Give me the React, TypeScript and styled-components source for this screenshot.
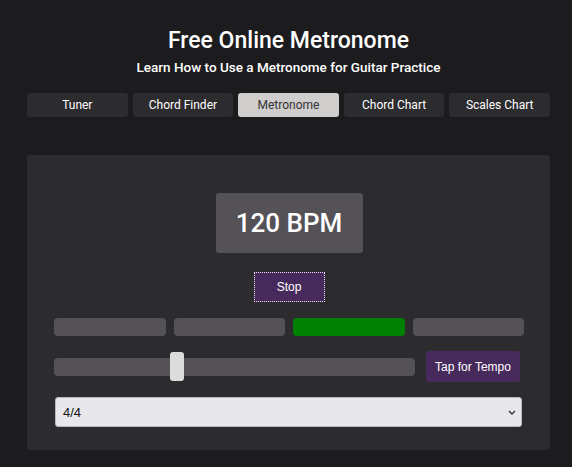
import React, { useState } from "react";
import styled, { createGlobalStyle } from "styled-components";

const Global = createGlobalStyle`
  html, body { margin: 0; padding: 0; background: #1c1b1e; }
  body { font-family: Roboto, "Liberation Sans", Arial, sans-serif; color: #fff; }
`;

const Page = styled.div`
  padding: 27px 22px 17px 27px;
  display: flex;
  flex-direction: column;
`;

const Title = styled.h1`
  margin: 0;
  font-size: 23px;
  line-height: 27px;
  font-weight: 500;
  text-align: center;
  color: #fff;
`;

const Subtitle = styled.h2`
  margin: 4px 0 0;
  font-size: 13.5px;
  line-height: 18px;
  font-weight: 500;
  text-align: center;
  color: #fff;
`;

const Tabs = styled.nav`
  margin-top: 17px;
  display: grid;
  grid-template-columns: repeat(5, 1fr);
  gap: 5px;
`;

const Tab = styled.button<{ $active?: boolean }>`
  height: 24px;
  border: none;
  border-radius: 3px;
  background: ${(p) => (p.$active ? "#d0cdcd" : "#2c2b2e")};
  color: ${(p) => (p.$active ? "#333" : "#fff")};
  font-family: Roboto, sans-serif;
  font-size: 12px;
  font-weight: 400;
  padding: 0;
  cursor: pointer;
`;

const Card = styled.section`
  margin-top: 38px;
  background: #2c2b2e;
  border-radius: 3px;
  padding: 38px 26px 23px 27px;
  display: flex;
  flex-direction: column;
  align-items: center;
`;

const BpmBox = styled.div`
  width: 147px;
  height: 60px;
  border-radius: 3px;
  background: #555257;
  display: flex;
  align-items: center;
  justify-content: center;
  font-size: 26px;
  font-weight: 500;
  color: #fff;
`;

const ActionButton = styled.button<{ $width: number; $focused?: boolean }>`
  width: ${(p) => p.$width}px;
  height: 30px;
  border: none;
  background: #472a5c;
  color: #fff;
  font-family: "Liberation Sans", Arial, sans-serif;
  font-size: 12px;
  padding: 0;
  flex-shrink: 0;
  outline: ${(p) => (p.$focused ? "1px dotted #e8dff0" : "none")};
  outline-offset: -1px;
  border-radius: ${(p) => (p.$focused ? "0" : "3px")};
`;

const StopWrap = styled.div`
  margin-top: 19px;
`;

const Beats = styled.div`
  margin-top: 16px;
  align-self: stretch;
  display: grid;
  grid-template-columns: repeat(4, 1fr);
  gap: 8px;
`;

const Beat = styled.div<{ $on?: boolean }>`
  height: 18px;
  border-radius: 4px;
  background: ${(p) => (p.$on ? "#008000" : "#555257")};
`;

const SliderRow = styled.div`
  margin-top: 15px;
  align-self: stretch;
  display: flex;
  align-items: center;
  gap: 11px;
  padding-right: 4px;
`;

const Range = styled.input`
  -webkit-appearance: none;
  appearance: none;
  flex: 1;
  margin: 0;
  height: 18px;
  border-radius: 4px;
  background: #555257;
  outline: none;
  &::-webkit-slider-thumb {
    -webkit-appearance: none;
    appearance: none;
    width: 14px;
    height: 29px;
    border-radius: 3px;
    background: #dcdcdc;
    cursor: pointer;
  }
`;

const TapButton = styled(ActionButton)`
  height: 31px;
  border-radius: 3px;
`;

const chevron = encodeURIComponent(
  `<svg xmlns="http://www.w3.org/2000/svg" width="8" height="5" viewBox="0 0 8 5"><path d="M1 1l3 3 3-3" fill="none" stroke="#333" stroke-width="1.4"/></svg>`
);

const Select = styled.select`
  margin-top: 15px;
  align-self: stretch;
  margin-left: 1px;
  margin-right: 2px;
  height: 30px;
  border: 1px solid #b9b8bc;
  border-radius: 3px;
  -webkit-appearance: none;
  appearance: none;
  background: #e8e7eb url("data:image/svg+xml,${chevron}") no-repeat right 5px center;
  color: #111;
  font-family: "Liberation Sans", Arial, sans-serif;
  font-size: 13px;
  padding: 0 7px;
`;

const tabs = ["Tuner", "Chord Finder", "Metronome", "Chord Chart", "Scales Chart"];

export default function App() {
  const [bpm, setBpm] = useState(120);
  return (
    <>
      <Global />
      <Page>
        <Title>Free Online Metronome</Title>
        <Subtitle>Learn How to Use a Metronome for Guitar Practice</Subtitle>
        <Tabs>
          {tabs.map((t) => (
            <Tab key={t} $active={t === "Metronome"}>
              {t}
            </Tab>
          ))}
        </Tabs>
        <Card>
          <BpmBox>{bpm} BPM</BpmBox>
          <StopWrap>
            <ActionButton $width={71} $focused>
              Stop
            </ActionButton>
          </StopWrap>
          <Beats>
            <Beat />
            <Beat />
            <Beat $on />
            <Beat />
          </Beats>
          <SliderRow>
            <Range
              type="range"
              min={30}
              max={300}
              value={bpm}
              onChange={(e) => setBpm(Number(e.target.value))}
            />
            <TapButton $width={94}>Tap for Tempo</TapButton>
          </SliderRow>
          <Select defaultValue="4/4">
            <option>2/4</option>
            <option>3/4</option>
            <option>4/4</option>
            <option>6/8</option>
          </Select>
        </Card>
      </Page>
    </>
  );
}
